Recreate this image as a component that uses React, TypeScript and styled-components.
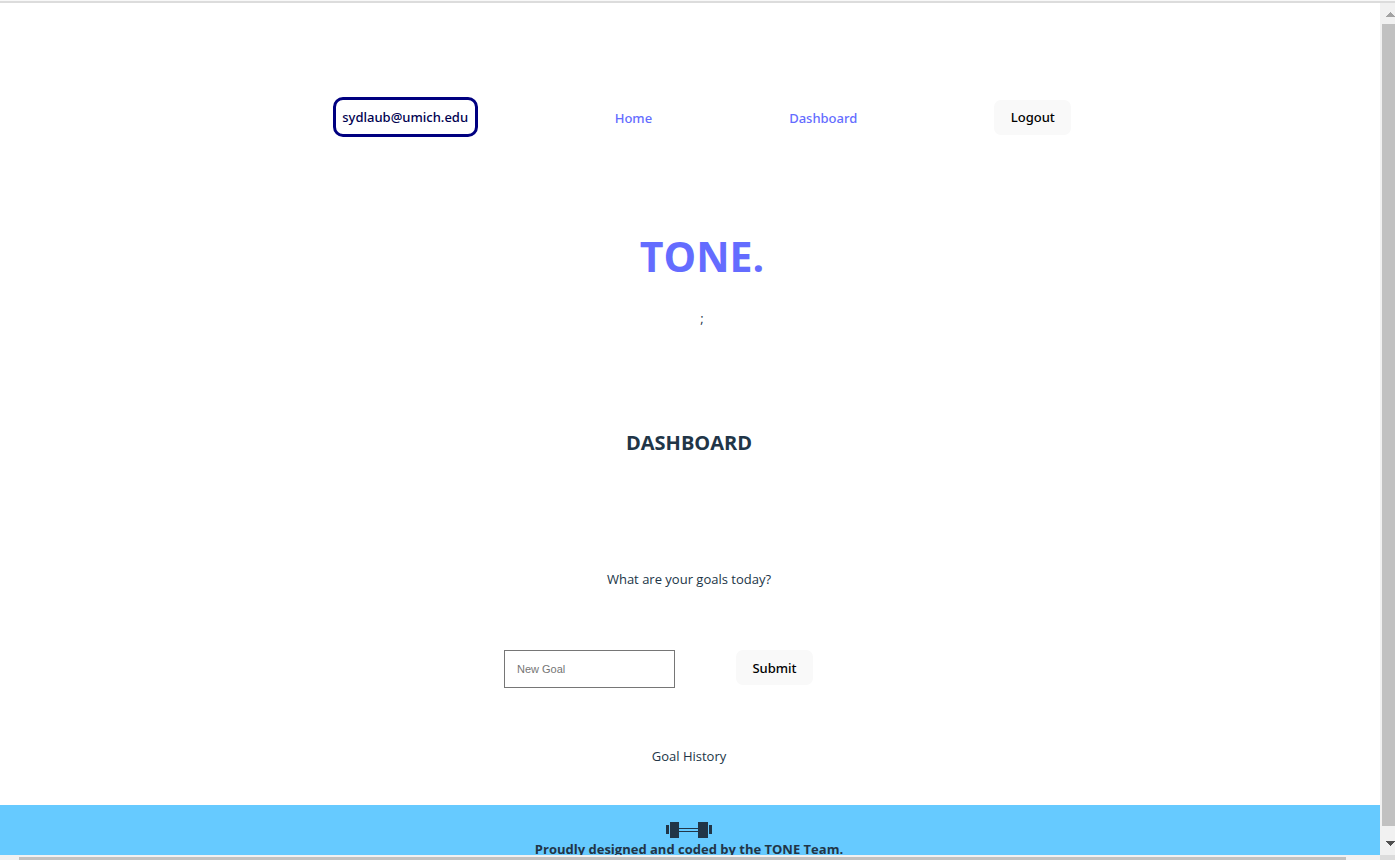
import React from "react";
import styled, { createGlobalStyle } from "styled-components";

const GlobalStyle = createGlobalStyle`
  *, *::before, *::after { box-sizing: border-box; }
  body {
    margin: 0;
    background: #ffffff;
    color: #213547;
    font-family: "Segoe UI", "Open Sans", "Noto Sans", sans-serif;
    font-size: 13px;
    line-height: 20px;
  }
`;

const mediumFont = `"Segoe UI", "Noto Sans", "Open Sans", sans-serif`;

const Window = styled.div`
  display: grid;
  grid-template-columns: minmax(0, 1fr) 15px;
  grid-template-rows: 3px minmax(0, 1fr) 5px;
  height: 100vh;
  overflow: hidden;
`;

const TopEdge = styled.div`
  grid-column: 1 / -1;
  border-top: 1px solid #f8f8f8;
  border-bottom: 2px solid #dcdcdc;
`;

const Page = styled.div`
  overflow: hidden;
`;

const Header = styled.header`
  display: flex;
  flex-direction: column;
  align-items: center;
  padding: 94px 0 0 24px;
`;

const Nav = styled.nav`
  display: flex;
  align-items: center;
  gap: 137px;
`;

const UserBadge = styled.div`
  width: 145px;
  height: 40px;
  padding: 7px 0;
  border: 3px solid #000080;
  border-radius: 10px;
  color: #000050;
  font-family: ${mediumFont};
  font-weight: 500;
  text-align: center;
`;

const NavLink = styled.a`
  padding-top: 2px;
  color: #646cff;
  font-family: ${mediumFont};
  font-weight: 500;
  text-decoration: none;
`;

const Button = styled.button`
  width: 77px;
  height: 35px;
  padding: 0;
  border: 0;
  border-radius: 7px;
  background: #f9f9f9;
  color: #000000;
  font: inherit;
  font-family: ${mediumFont};
  font-weight: 500;
`;

const Title = styled.h1`
  margin: 95px 0 0;
  color: #646cff;
  font-size: 41px;
  font-weight: 700;
  line-height: 48px;
`;

const Stray = styled.p`
  margin: 28px 0 0;
`;

const Main = styled.main`
  display: flex;
  flex-direction: column;
  align-items: center;
  padding-right: 2px;
`;

const Heading = styled.h2`
  margin: 101px 0 0;
  font-size: 20px;
  font-weight: 700;
  line-height: 28px;
`;

const Question = styled.label`
  margin-top: 112px;
`;

const GoalForm = styled.form`
  display: flex;
  align-items: flex-start;
  gap: 61px;
  margin-top: 61px;
  padding-right: 61px;
`;

const GoalInput = styled.input`
  width: 171px;
  height: 38px;
  padding: 0 12px;
  border: 1px solid #767676;
  border-radius: 0;
  background: #ffffff;
  color: #213547;
  font-family: "Liberation Sans", Arial, sans-serif;
  font-size: 11px;
  &::placeholder { color: #757575; opacity: 1; }
`;

const History = styled.p`
  margin: 58px 0 39px;
`;

const Footer = styled.footer`
  display: flex;
  flex-direction: column;
  align-items: center;
  padding: 17px 2px 24px 0;
  background: #66caff;
  font-weight: 700;
`;

const Credit = styled.p`
  margin: 0;
`;

const VerticalBar = styled.div`
  display: flex;
  flex-direction: column;
  overflow: hidden;
  padding-left: 2px;
  background: #f1f1f1;
`;

const VerticalThumb = styled.div`
  flex: 1;
  background: #c1c1c1;
`;

const ArrowBox = styled.div<{ $size: number; $top: number }>`
  height: ${(p) => p.$size}px;
  padding: ${(p) => p.$top}px 0 0 4px;
  line-height: 0;
`;

const HorizontalBar = styled.div`
  padding: 2px 34px 0 19px;
  background: #f1f1f1;
`;

const HorizontalThumb = styled.div`
  height: 3px;
  background: #c1c1c1;
`;

const Corner = styled.div`
  background: #dcdcdc;
`;

const Dumbbell = () => (
  <svg width="48" height="17" viewBox="0 0 48 17" fill="#213547" shapeRendering="crispEdges" aria-hidden="true">
    <rect x="1" y="3" width="3" height="9" />
    <rect x="5" y="0" width="9" height="16" />
    <rect x="14" y="6" width="19" height="1" />
    <rect x="14" y="9" width="19" height="1" />
    <rect x="33" y="0" width="10" height="16" />
    <rect x="44" y="3" width="3" height="9" />
  </svg>
);

export default function App() {
  return (
    <>
      <GlobalStyle />
      <Window>
        <TopEdge />
        <Page>
          <Header>
            <Nav>
              <UserBadge>sydlaub@umich.edu</UserBadge>
              <NavLink href="#home">Home</NavLink>
              <NavLink href="#dashboard">Dashboard</NavLink>
              <Button type="button">Logout</Button>
            </Nav>
            <Title>TONE.</Title>
            <Stray>;</Stray>
          </Header>
          <Main>
            <Heading>DASHBOARD</Heading>
            <Question htmlFor="goal">What are your goals today?</Question>
            <GoalForm onSubmit={(e) => e.preventDefault()}>
              <GoalInput id="goal" type="text" placeholder="New Goal" />
              <Button type="submit">Submit</Button>
            </GoalForm>
            <History>Goal History</History>
          </Main>
          <Footer>
            <Dumbbell />
            <Credit>Proudly designed and coded by the TONE Team.</Credit>
          </Footer>
        </Page>
        <VerticalBar>
          <ArrowBox $size={21} $top={9}>
            <svg width="9" height="5" viewBox="0 0 9 5" fill="#a3a3a3" aria-hidden="true">
              <path d="M4 0h1v1h1v1h1v1h1v1h1v1H0V4h1V3h1V2h1V1h1z" />
            </svg>
          </ArrowBox>
          <VerticalThumb />
          <ArrowBox $size={29} $top={15}>
            <svg width="9" height="5" viewBox="0 0 9 5" fill="#505050" aria-hidden="true">
              <path d="M0 0h9v1H8v1H7v1H6v1H5v1H4V4H3V3H2V2H1V1H0z" />
            </svg>
          </ArrowBox>
        </VerticalBar>
        <HorizontalBar>
          <HorizontalThumb />
        </HorizontalBar>
        <Corner />
      </Window>
    </>
  );
}
